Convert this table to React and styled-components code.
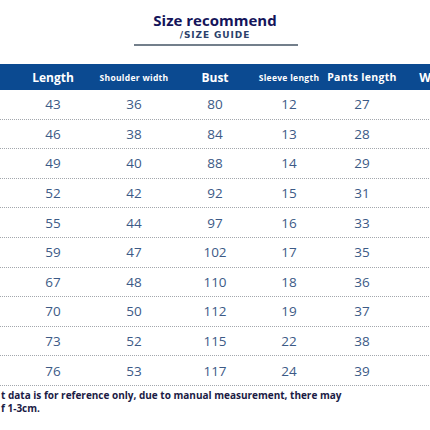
import React from "react";
import styled, { createGlobalStyle } from "styled-components";

const GlobalStyle = createGlobalStyle`
  html, body {
    margin: 0;
    padding: 0;
    background: #fff;
    overflow: hidden;
  }
`;

const Page = styled.div`
  width: 430px;
  height: 430px;
  overflow: hidden;
  font-family: "Open Sans", "Liberation Sans", sans-serif;
`;

const Heading = styled.div`
  display: flex;
  flex-direction: column;
  align-items: center;
  padding-top: 10px;
`;

const Title = styled.h1`
  margin: 0;
  font-size: 15px;
  line-height: 20px;
  font-weight: 700;
  color: #14145a;
`;

const SubTitle = styled.div`
  font-family: "DejaVu Sans", "Liberation Sans", sans-serif;
  font-size: 9px;
  line-height: 11px;
  font-weight: 700;
  letter-spacing: 0.9px;
  color: #2b3f6b;
`;

const Rule = styled.div`
  width: 164px;
  height: 2px;
  margin-top: 3px;
  margin-left: 2px;
  background: #737f8b;
`;

const Table = styled.div`
  margin-top: 18px;
  width: 471px;
`;

const cols = "13px 80px 82px 80px 68px 78px 70px";

const HeadRow = styled.div`
  display: grid;
  grid-template-columns: ${cols};
  height: 26px;
  align-items: center;
  background: #0b4a91;
  color: #fff;
  font-weight: 700;
`;

const HeadCell = styled.div`
  text-align: center;
  white-space: nowrap;
  font-size: ${(p) => p.$size || 12}px;
  letter-spacing: ${(p) => p.$spacing || 0}px;
`;

const Row = styled.div`
  display: grid;
  grid-template-columns: ${cols};
  height: 29.6px;
  align-items: center;
  border-bottom: 1px dotted #a3a7ad;
  box-sizing: border-box;
`;

const Cell = styled.div`
  text-align: center;
  font-size: 13.5px;
  color: #3c5a86;
`;

const Note = styled.p`
  margin: 3px 0 0 1px;
  font-size: 10px;
  line-height: 13px;
  font-weight: 700;
  color: #1b1b45;
`;

const rows = [
  [43, 36, 80, 12, 27],
  [46, 38, 84, 13, 28],
  [49, 40, 88, 14, 29],
  [52, 42, 92, 15, 31],
  [55, 44, 97, 16, 33],
  [59, 47, 102, 17, 35],
  [67, 48, 110, 18, 36],
  [70, 50, 112, 19, 37],
  [73, 52, 115, 22, 38],
  [76, 53, 117, 24, 39],
];

export default function App() {
  return (
    <Page>
      <GlobalStyle />
      <Heading>
        <Title>Size recommend</Title>
        <SubTitle>/SIZE GUIDE</SubTitle>
        <Rule />
      </Heading>
      <Table>
        <HeadRow>
          <HeadCell />
          <HeadCell>Length</HeadCell>
          <HeadCell $size={8.5} $spacing={0.3}>Shoulder width</HeadCell>
          <HeadCell>Bust</HeadCell>
          <HeadCell $size={8.5} $spacing={0.3}>Sleeve length</HeadCell>
          <HeadCell $size={10.5} $spacing={0.3}>Pants length</HeadCell>
          <HeadCell>Waist</HeadCell>
        </HeadRow>
        {rows.map((r, i) => (
          <Row key={i}>
            <Cell />
            {r.map((v, j) => (
              <Cell key={j}>{v}</Cell>
            ))}
            <Cell />
          </Row>
        ))}
      </Table>
      <Note>
        t data is for reference only, due to manual measurement, there may
        <br />f 1-3cm.
      </Note>
    </Page>
  );
}
